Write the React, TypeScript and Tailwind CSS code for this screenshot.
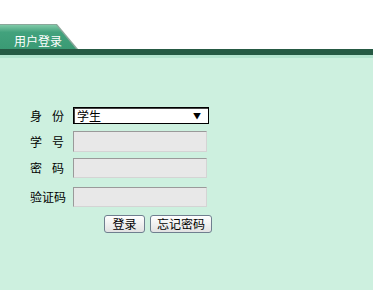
import React from "react";

export default function App() {
  const font = { fontFamily: '"Noto Sans CJK SC", "Noto Sans", sans-serif' };
  const inputCls =
    "w-[134px] bg-[#e8e8e8] border border-t-[#9a9a9a] border-l-[#9a9a9a] border-b-[#d4d4d4] border-r-[#d4d4d4]";
  return (
    <div
      className="w-[373px] h-[290px] bg-[#cdf0df] flex flex-col overflow-hidden text-black"
      style={font}
    >
      <div className="h-[24px] bg-white shrink-0" />
      <div className="h-[25px] bg-white shrink-0 flex items-end">
        <div className="w-[78px] h-[25px] pt-[1px] bg-[#8aa79a] [clip-path:polygon(0_0,57px_0,78px_25px,0_25px)]">
          <div className="w-[77px] h-[24px] bg-gradient-to-b from-[#7fcaa8] via-[#42a27d] via-30% to-[#3a9a74] [clip-path:polygon(0_0,56px_0,76px_24px,0_24px)] flex items-center pl-[14px] pt-[7px]">
            <span className="text-white text-[12px] leading-none">用户登录</span>
          </div>
        </div>
      </div>
      <div className="h-[6px] bg-[#265a44] shrink-0" />
      <div className="h-[3px] bg-[#b4e4cf] shrink-0" />
      <div className="pt-[49px] pl-[30px] text-[12px] leading-none">
        <div className="flex items-center h-[17px]">
          <div className="w-[43px] flex gap-[10px]">
            <span>身</span>
            <span>份</span>
          </div>
          <div className="w-[136px] h-[17px] bg-white border border-black shadow-[inset_1px_1px_0_#444] flex items-center justify-between pl-[3px] pr-[7px]">
            <span>学生</span>
            <span className="text-[8px]">▼</span>
          </div>
        </div>
        <div className="flex items-center mt-[7px]">
          <div className="w-[43px] flex gap-[10px]">
            <span>学</span>
            <span>号</span>
          </div>
          <div className={`${inputCls} h-[21px]`} />
        </div>
        <div className="flex items-center mt-[6px]">
          <div className="w-[43px] flex gap-[10px]">
            <span>密</span>
            <span>码</span>
          </div>
          <div className={`${inputCls} h-[20px]`} />
        </div>
        <div className="flex items-center mt-[9px]">
          <div className="w-[43px]">验证码</div>
          <div className={`${inputCls} h-[20px]`} />
        </div>
        <div className="flex mt-[8px] ml-[74px] gap-[5px]">
          <button className="w-[41px] h-[18px] rounded-[3px] border border-[#6f7f8f] bg-gradient-to-b from-white to-[#e2e2e2] text-[12px] leading-none flex items-center justify-center">
            登录
          </button>
          <button className="w-[62px] h-[18px] rounded-[3px] border border-[#6f7f8f] bg-gradient-to-b from-white to-[#e2e2e2] text-[12px] leading-none flex items-center justify-center">
            忘记密码
          </button>
        </div>
      </div>
    </div>
  );
}
